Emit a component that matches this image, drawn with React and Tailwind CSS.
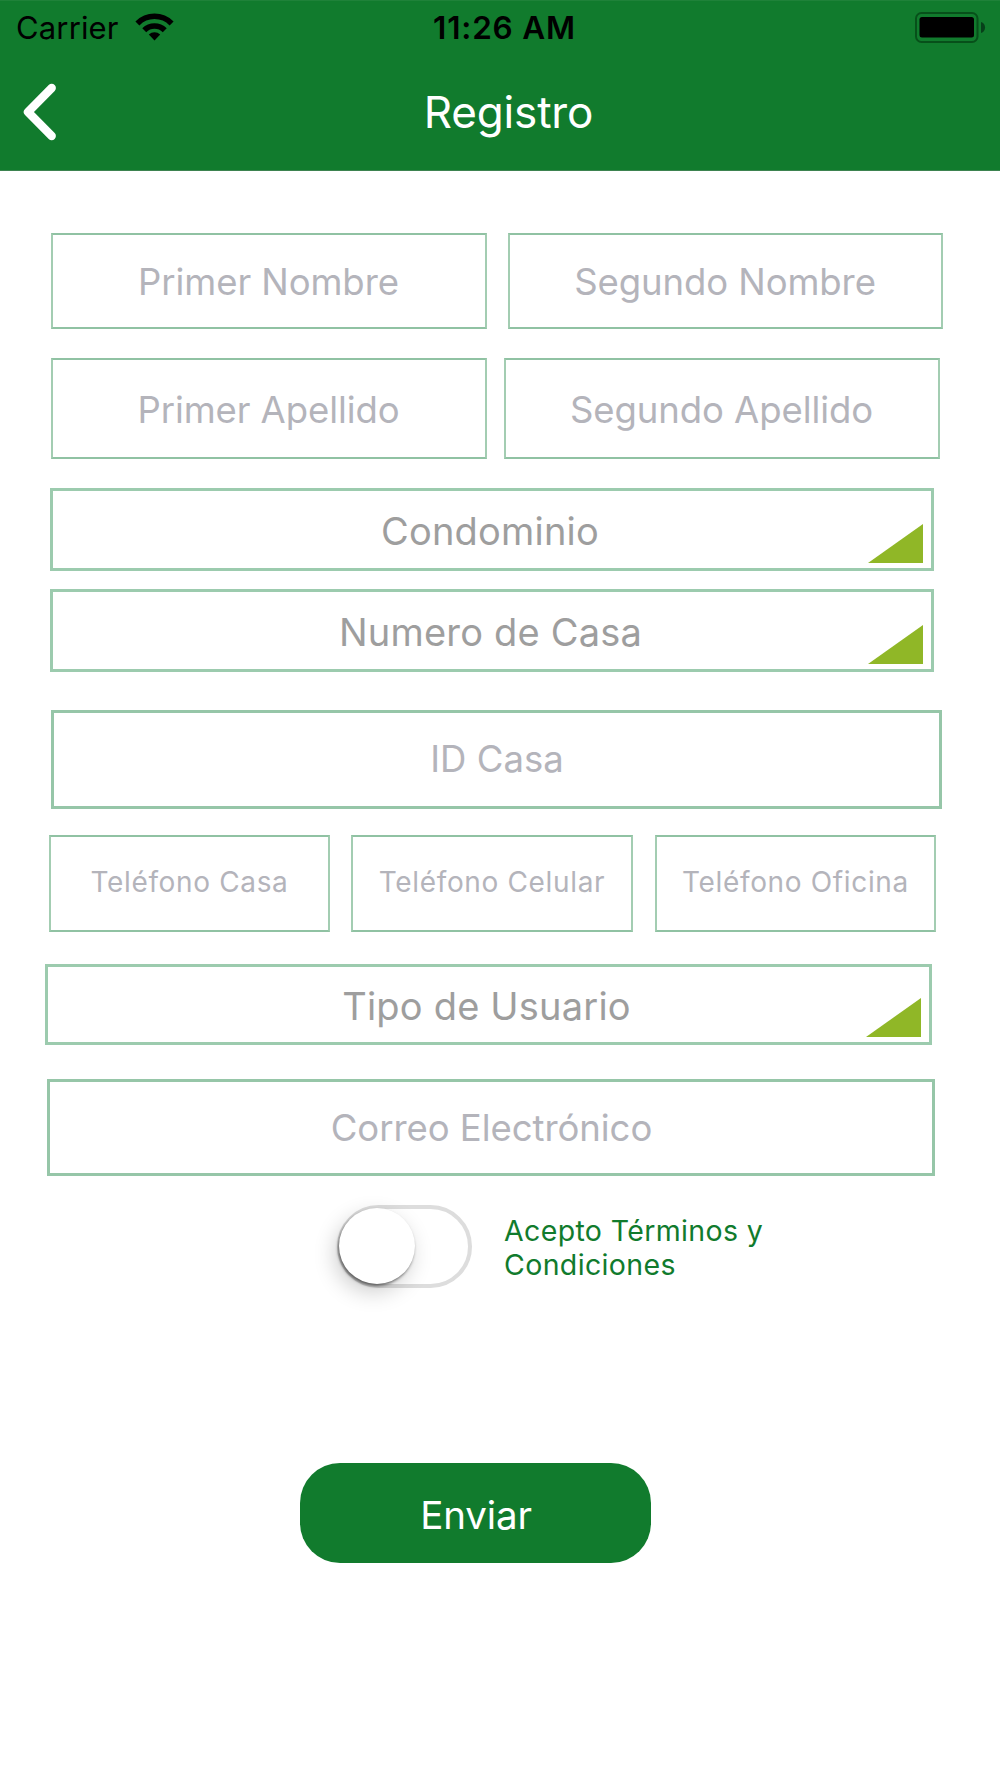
// src/pages/RegistroPage.jsx
import React, { useState } from 'react'
import clsx from 'clsx'

function StatusBar() {
  return (
    <div className="grid grid-cols-3 items-center h-[52px] text-black">
      <div className="flex items-center pl-[16px]">
        <span className="text-[31px] leading-none tracking-[0.15px]">Carrier</span>
        <svg className="ml-4 w-[39px] h-[28px]" viewBox="0 0 39 28" fill="none">
          <path d="M2.4 10.4A24.15 24.15 0 0 1 36.6 10.4" stroke="currentColor" strokeWidth="5.6" />
          <path d="M9.25 17.25A14.5 14.5 0 0 1 29.75 17.25" stroke="currentColor" strokeWidth="5.6" />
          <path d="M19.5 27.5L13.8 21.6A8.3 8.3 0 0 1 25.2 21.6Z" fill="currentColor" />
        </svg>
      </div>
      <span className="pt-px pl-[9px] text-center text-[31.5px] leading-none font-semibold tracking-[0.8px]">
        11:26 AM
      </span>
      <svg className="justify-self-end mr-[14px] w-[71px] h-[31px]" viewBox="0 0 71 31" fill="none">
        <rect x="1" y="1" width="61.5" height="29" rx="5.5" stroke="#07501a" strokeWidth="2" />
        <rect x="4.5" y="5" width="54.5" height="20.5" rx="2.5" fill="black" />
        <path d="M66 10C71.4 11 71.4 20 66 21Z" fill="#07401a" />
      </svg>
    </div>
  )
}

function Campo({ label, className }) {
  return (
    <div className={clsx('flex items-center justify-center text-[#b4b4bb]', className)}>
      {label}
    </div>
  )
}

function Selector({ label, className }) {
  return (
    <button
      className={clsx(
        'relative flex items-center justify-center border-3 border-[#9ccbae] text-[38px] leading-none tracking-[0.2px] text-[#9e9e9e] font-[380]',
        className
      )}
    >
      {label}
      <svg className="absolute right-[8px] bottom-[5px] w-[55px] h-[39px]" viewBox="0 0 55 39">
        <path d="M55 0V39H0Z" fill="#90b727" />
      </svg>
    </button>
  )
}

export default function RegistroPage() {
  const [acepto, setAcepto] = useState(false)

  return (
    <div className="w-[1000px] h-[1778px] overflow-hidden bg-white font-['Inter','Liberation_Sans',sans-serif]">
      <header className="h-[171px] bg-[#117b2d] border-t border-t-[#1f8239] border-b border-b-[#3d8350]">
        <StatusBar />
        <div className="grid grid-cols-3 items-center h-[118px]">
          <button className="ml-[22px] w-[36px]">
            <svg className="w-[36px] h-[60px]" viewBox="0 0 36 60" fill="none">
              <path
                d="M29.7 6L6 30L29.7 54"
                stroke="white"
                strokeWidth="8.4"
                strokeLinecap="round"
                strokeLinejoin="round"
              />
            </svg>
          </button>
          <h1 className="pl-[17px] text-center text-[44px] leading-none tracking-[-0.15px] text-white font-[370]">
            Registro
          </h1>
        </div>
      </header>

      <main className="flex flex-col">
        <div className="flex gap-[21px] mt-[62px] ml-[50.5px] h-24 text-[36.5px] leading-none tracking-[-0.08px] font-[380]">
          <Campo label="Primer Nombre" className="w-[436px] pt-0.5 border-2 border-[#90c2a3] border-x-[#a3cdb2]" />
          <Campo label="Segundo Nombre" className="w-[435px] pt-0.5 border-2 border-[#90c2a3] border-x-[#a3cdb2]" />
        </div>
        <div className="flex gap-[17px] mt-[29px] ml-[50.5px] h-[101px] text-[36.5px] leading-none tracking-[-0.08px] font-[380]">
          <Campo label="Primer Apellido" className="w-[436px] pt-[3px] border-2 border-[#90c2a3] border-x-[#a3cdb2]" />
          <Campo label="Segundo Apellido" className="w-[436px] pt-[3px] border-2 border-[#90c2a3] border-x-[#a3cdb2]" />
        </div>

        <Selector label="Condominio" className="mt-[29px] ml-[50px] w-[884px] h-[83px] pt-[3px] pr-[4px]" />
        <Selector label="Numero de Casa" className="mt-[18px] ml-[50px] w-[884px] h-[83px] pt-[3px] pr-[3px]" />

        <Campo
          label="ID Casa"
          className="mt-[38px] ml-[51px] w-[891px] h-[99px] pb-px pl-px border-3 border-[#96c6a8] text-[36.5px] leading-none tracking-[0.02px] font-[380]"
        />

        <div className="flex gap-[22px] mt-[26px] ml-[49px] h-[97px] text-[28px] leading-none tracking-[0.65px] font-[380]">
          <Campo label="Teléfono Casa" className="w-[281px] pb-1 border-2 border-[#90c2a3] border-x-[#a3cdb2]" />
          <Campo label="Teléfono Celular" className="-ml-px w-[282px] pb-1 border-2 border-[#90c2a3] border-x-[#a3cdb2]" />
          <Campo label="Teléfono Oficina" className="w-[281px] pb-1 border-2 border-[#90c2a3] border-x-[#a3cdb2]" />
        </div>

        <Selector label="Tipo de Usuario" className="mt-[32px] ml-[45px] w-[887px] h-[81px] pt-[3px] pr-[4px]" />

        <Campo
          label="Correo Electrónico"
          className="mt-[34px] ml-[47px] w-[888px] h-[97px] pt-0.5 pl-px border-3 border-[#96c6a8] text-[36.5px] leading-none tracking-[-0.05px] font-[380]"
        />

        <div className="flex mt-[29px] ml-[336.5px]">
          <button
            role="switch"
            aria-checked={acepto}
            onClick={() => setAcepto(!acepto)}
            className="flex items-center w-[135px] h-[83px] pb-px rounded-full border-4 border-[#dddddd]"
          >
            <span
              className={clsx(
                'w-[76px] h-[76px] rounded-full bg-white shadow-[-1px_2px_3px_rgba(0,0,0,0.5),-4px_8px_22px_rgba(0,0,0,0.2)]',
                acepto ? 'ml-[52px]' : '-ml-0.5'
              )}
            />
          </button>
          <p className="mt-[8.5px] ml-[32.5px] w-[280px] text-[28.5px] leading-[34.6px] tracking-[0.36px] text-[#117b2d]">
            Acepto Términos y Condiciones
          </p>
        </div>

        <button className="mt-[175px] ml-[300px] w-[351px] h-[100px] pt-[4px] pl-px rounded-[40px] bg-[#117b2d] text-[38.5px] leading-none tracking-[-0.15px] text-white font-[380]">
          Enviar
        </button>
      </main>
    </div>
  )
}
